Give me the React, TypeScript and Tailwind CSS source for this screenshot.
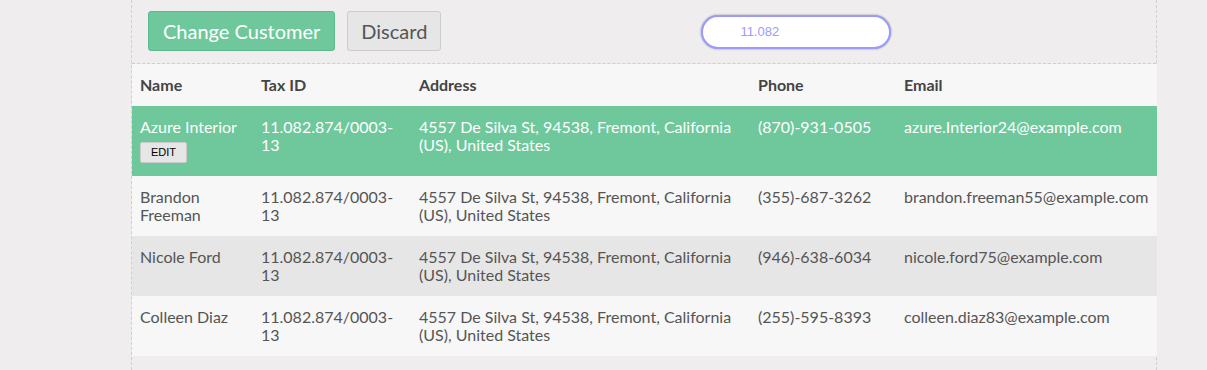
const rows = [
  {
    name: "Azure Interior",
    phone: "(870)-931-0505",
    email: "azure.Interior24@example.com",
    selected: true,
  },
  {
    name: "Brandon Freeman",
    phone: "(355)-687-3262",
    email: "brandon.freeman55@example.com",
  },
  {
    name: "Nicole Ford",
    phone: "(946)-638-6034",
    email: "nicole.ford75@example.com",
    dark: true,
  },
  {
    name: "Colleen Diaz",
    phone: "(255)-595-8393",
    email: "colleen.diaz83@example.com",
  },
];

export default function App() {
  return (
    <div
      className="w-[1207px] h-[370px] bg-[#efeded] overflow-hidden text-[#555]"
      style={{ fontFamily: "Lato, 'Liberation Sans', sans-serif" }}
    >
      <div className="ml-[131px] w-[1026px] h-full border-x border-dashed border-[#cfcfcf]">
        {/* toolbar */}
        <div className="h-[64px] flex items-start pt-[11px] pl-[16px] border-b border-dashed border-[#cfcfcf]">
          <button className="h-[40px] px-[14px] bg-[#6ec89b] border border-[#5cb98a] rounded-[3px] text-white text-[20px] leading-none">
            Change Customer
          </button>
          <button className="ml-[12px] h-[40px] px-[13px] bg-[#e6e6e6] border border-[#cccccc] rounded-[3px] text-[#555] text-[20px] leading-none">
            Discard
          </button>
          <div className="ml-[260px] mt-[4px] w-[190px] h-[34px] rounded-full bg-white border-2 border-[#9b9bff] shadow-[0_0_2px_#888] flex items-center pl-[37px]">
            <span
              className="text-[13px] text-[#9b9bff]"
              style={{ fontFamily: "'Liberation Sans', Arial, sans-serif" }}
            >
              11.082
            </span>
          </div>
        </div>

        {/* table */}
        <table className="w-[1025px] table-fixed border-collapse text-[16px] leading-[18px]">
          <colgroup>
            <col className="w-[121px]" />
            <col className="w-[158px]" />
            <col className="w-[339px]" />
            <col className="w-[146px]" />
            <col />
          </colgroup>
          <thead>
            <tr className="bg-[#f7f7f7] text-[#444] font-bold h-[42px]">
              <th className="text-left px-[8px] py-[12px]">Name</th>
              <th className="text-left px-[8px] py-[12px]">Tax ID</th>
              <th className="text-left px-[8px] py-[12px]">Address</th>
              <th className="text-left px-[8px] py-[12px]">Phone</th>
              <th className="text-left px-[8px] py-[12px]">Email</th>
            </tr>
          </thead>
          <tbody>
            {rows.map((r) => (
              <tr
                key={r.name}
                className={
                  r.selected
                    ? "bg-[#6ec89b] text-white align-top h-[70px]"
                    : r.dark
                    ? "bg-[#e6e6e6] align-top h-[60px]"
                    : "bg-[#f7f7f7] align-top h-[60px]"
                }
              >
                <td className="px-[8px] py-[12px]">
                  {r.name}
                  {r.selected && (
                    <div>
                      <button
                        className="mt-[6px] w-[47px] h-[21px] bg-[#e6e6e6] border border-[#cccccc] rounded-[2px] text-[11px] text-black leading-none"
                        style={{ fontFamily: "'Liberation Sans', Arial, sans-serif" }}
                      >
                        EDIT
                      </button>
                    </div>
                  )}
                </td>
                <td className="px-[8px] py-[12px]">11.082.874/0003-13</td>
                <td className="px-[8px] py-[12px]">
                  4557 De Silva St, 94538, Fremont, California (US), United States
                </td>
                <td className="px-[8px] py-[12px]">{r.phone}</td>
                <td className="px-[8px] py-[12px]">{r.email}</td>
              </tr>
            ))}
          </tbody>
        </table>
      </div>
    </div>
  );
}
